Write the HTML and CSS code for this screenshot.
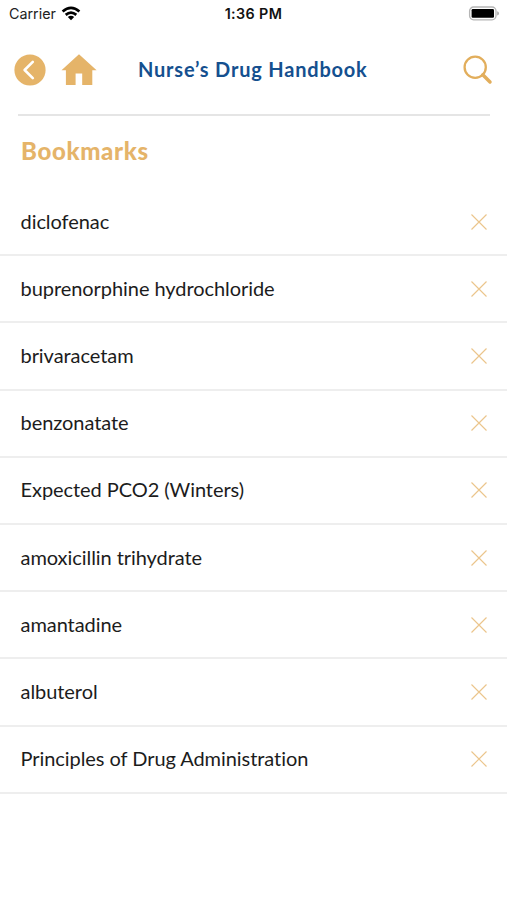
FILE: index.html
```html
<!DOCTYPE html>
<html lang="en">
<head>
<meta charset="utf-8">
<title>Bookmarks</title>
<link rel="stylesheet" href="styles.css">
</head>
<body>
<svg width="0" height="0" class="defs"><symbol id="x" viewBox="0 0 18 18"><path d="M1.5 1.5l15 15M16.5 1.5l-15 15" fill="none" stroke="currentColor" stroke-width="1.15"/></symbol></svg>
<div class="status">
  <div class="carrier"><span>Carrier</span>
    <svg width="20" height="16" viewBox="0 0 20 16"><g fill="none" stroke="#000" stroke-width="2.7"><path d="M1.6 5.4Q10-1.8 18.4 5.4"/><path d="M4.7 8.9Q10 4.4 15.3 8.9"/></g><path d="M6.8 11Q10 8.4 13.2 11L10 14.3z"/></svg>
  </div>
  <div class="time">1:36 PM</div>
  <svg class="battery" width="32" height="16" viewBox="0 0 32 16"><rect x="1.6" y="1" width="26.4" height="12.8" rx="4" fill="#fff" stroke="#b5b5b5" stroke-width="1.3"/><rect x="3.6" y="3.1" width="22.4" height="8.7" rx="1.2"/><path d="M29.2 5.2q1.8 .6 1.8 2.2t-1.8 2.2z" fill="#aaa"/></svg>
</div>
<header class="nav">
  <svg width="32" height="32" viewBox="0 0 32 32"><circle cx="16" cy="16" r="15.6" fill="#e5b469"/><path d="M18.8 7.8L10.6 16l8.2 8.2" fill="none" stroke="#fff" stroke-width="2.6" stroke-linecap="round" stroke-linejoin="round"/></svg>
  <svg class="home" width="36" height="32" viewBox="0 0 36 32"><path d="M18 .2L35.6 16.2H31.3V31H21.2V19.5H14.6V31H4.9V16.2H.5z" fill="#e5b469"/></svg>
  <h1>Nurse’s Drug Handbook</h1>
  <svg class="search" width="30" height="30" viewBox="0 0 30 30" fill="none" stroke="#e2ae5c"><circle cx="12.2" cy="12.2" r="10.6" stroke-width="2.3"/><path d="M19.8 19.8L27 27" stroke-width="3.5" stroke-linecap="round"/></svg>
</header>
<main>
  <h2>Bookmarks</h2>
  <ul>
    <li><span>diclofenac</span><svg><use href="#x"/></svg></li>
    <li><span>buprenorphine hydrochloride</span><svg><use href="#x"/></svg></li>
    <li><span>brivaracetam</span><svg><use href="#x"/></svg></li>
    <li><span>benzonatate</span><svg><use href="#x"/></svg></li>
    <li><span>Expected PCO2 (Winters)</span><svg><use href="#x"/></svg></li>
    <li><span>amoxicillin trihydrate</span><svg><use href="#x"/></svg></li>
    <li><span>amantadine</span><svg><use href="#x"/></svg></li>
    <li><span>albuterol</span><svg><use href="#x"/></svg></li>
    <li><span>Principles of Drug Administration</span><svg><use href="#x"/></svg></li>
  </ul>
</main>
</body>
</html>
```
FILE: styles.css
```css
* { box-sizing: border-box; }
body { margin: 0; background: #fff; color: #1c1c1c; font-family: Lato, sans-serif; }
svg { display: block; flex: none; }
.defs { position: absolute; }
.status { height: 27px; padding: 0 7px 0 9px; display: grid; grid-template-columns: 1fr auto 1fr; align-items: center; font-family: Inter, sans-serif; font-size: 14.3px; color: #222; }
.carrier { display: flex; align-items: center; gap: 5px; }
.time { font-weight: 600; color: #111; letter-spacing: .4px; margin-left: -2px; }
.battery { justify-self: end; }
.nav { height: 88.5px; margin: 0 17px 0 18px; border-bottom: 2px solid #e5e5e5; display: flex; align-items: center; }
.nav > svg:first-child { margin-left: -4px; }
.home { margin-left: 15px; }
h1 { margin: 0 0 3px 41px; font-size: 20px; line-height: 24px; font-weight: 700; letter-spacing: .8px; color: #15508f; white-space: nowrap; }
.nav > .search { margin-left: auto; margin-right: -3px; margin-bottom: 1px; }
h2 { margin: 0; height: 73.6px; padding: 20px 21px 0; font-size: 24px; line-height: 30px; font-weight: 900; letter-spacing: .65px; color: #e5b469; }
ul { margin: 0; padding: 0; list-style: none; }
li { height: 67.2px; padding: 0 19px 0 20.5px; border-bottom: 2px solid #eee; display: flex; align-items: center; justify-content: space-between; font-size: 20px; letter-spacing: -.06px; white-space: nowrap; }
li span { margin-bottom: 2px; }
li svg { width: 18px; height: 18px; color: #ebc58c; }
```
